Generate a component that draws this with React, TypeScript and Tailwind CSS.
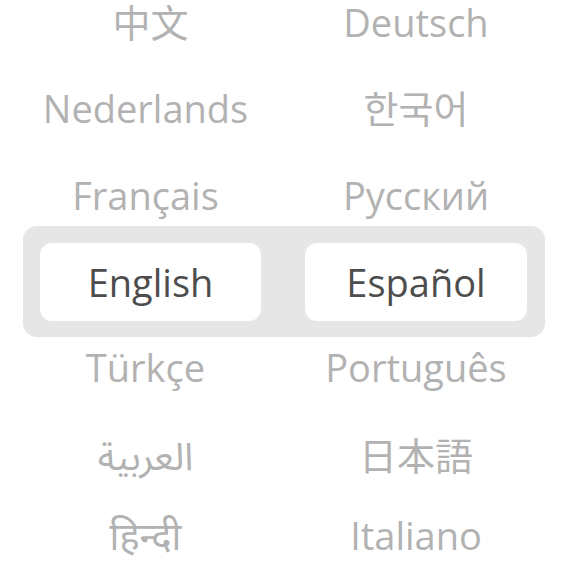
import React from "react";

const FONT = {
  fontFamily:
    '"Open Sans", "Noto Sans", "Noto Sans Arabic", "Noto Sans Devanagari", "Noto Sans CJK SC", "Noto Sans CJK JP", "Noto Sans CJK KR", sans-serif',
};

function Cell({ text, lang, shift }: { text: string; lang?: string; shift?: boolean }) {
  return (
    <div
      lang={lang}
      className={`flex items-center justify-center text-[38px] leading-none text-[#b2b2b2] whitespace-nowrap ${shift ? "pr-[10px]" : ""}`}
    >
      {text}
    </div>
  );
}

function Row({
  a,
  b,
  la,
  lb,
  cls,
  shift = true,
}: {
  a: string;
  b: string;
  la?: string;
  lb?: string;
  cls: string;
  shift?: boolean;
}) {
  return (
    <div className={`grid grid-cols-[221px_222px] gap-x-[44px] pl-[40px] h-[44px] ${cls}`}>
      <Cell text={a} lang={la} shift={shift} />
      <Cell text={b} lang={lb} />
    </div>
  );
}

export default function App() {
  return (
    <div className="w-[564px] h-[564px] bg-white overflow-hidden flex flex-col" style={FONT}>
      <Row a="中文" la="zh-CN" b="Deutsch" cls="mt-0" shift={false} />
      <Row a="Nederlands" b="한국어" lb="ko" cls="mt-[42px]" />
      <Row a="Français" b="Русский" cls="mt-[43px]" />
      <div className="mt-[9px] ml-[23px] w-[522px] h-[111px] rounded-[14px] bg-[#e6e6e6] pl-[17px] pt-[17px] flex gap-x-[44px]">
        <div className="w-[221px] h-[78px] rounded-[12px] bg-white flex items-center justify-center text-[38px] leading-none text-[#4d4d4d]">
          English
        </div>
        <div className="w-[222px] h-[78px] rounded-[12px] bg-white flex items-center justify-center text-[38px] leading-none text-[#4d4d4d]">
          Español
        </div>
      </div>
      <Row a="Türkçe" b="Português" cls="mt-[8px]" />
      <Row a="العربية" la="ar" b="日本語" lb="ja" cls="mt-[44px]" />
      <Row a="हिन्दी" la="hi" b="Italiano" cls="mt-[36px]" />
    </div>
  );
}
